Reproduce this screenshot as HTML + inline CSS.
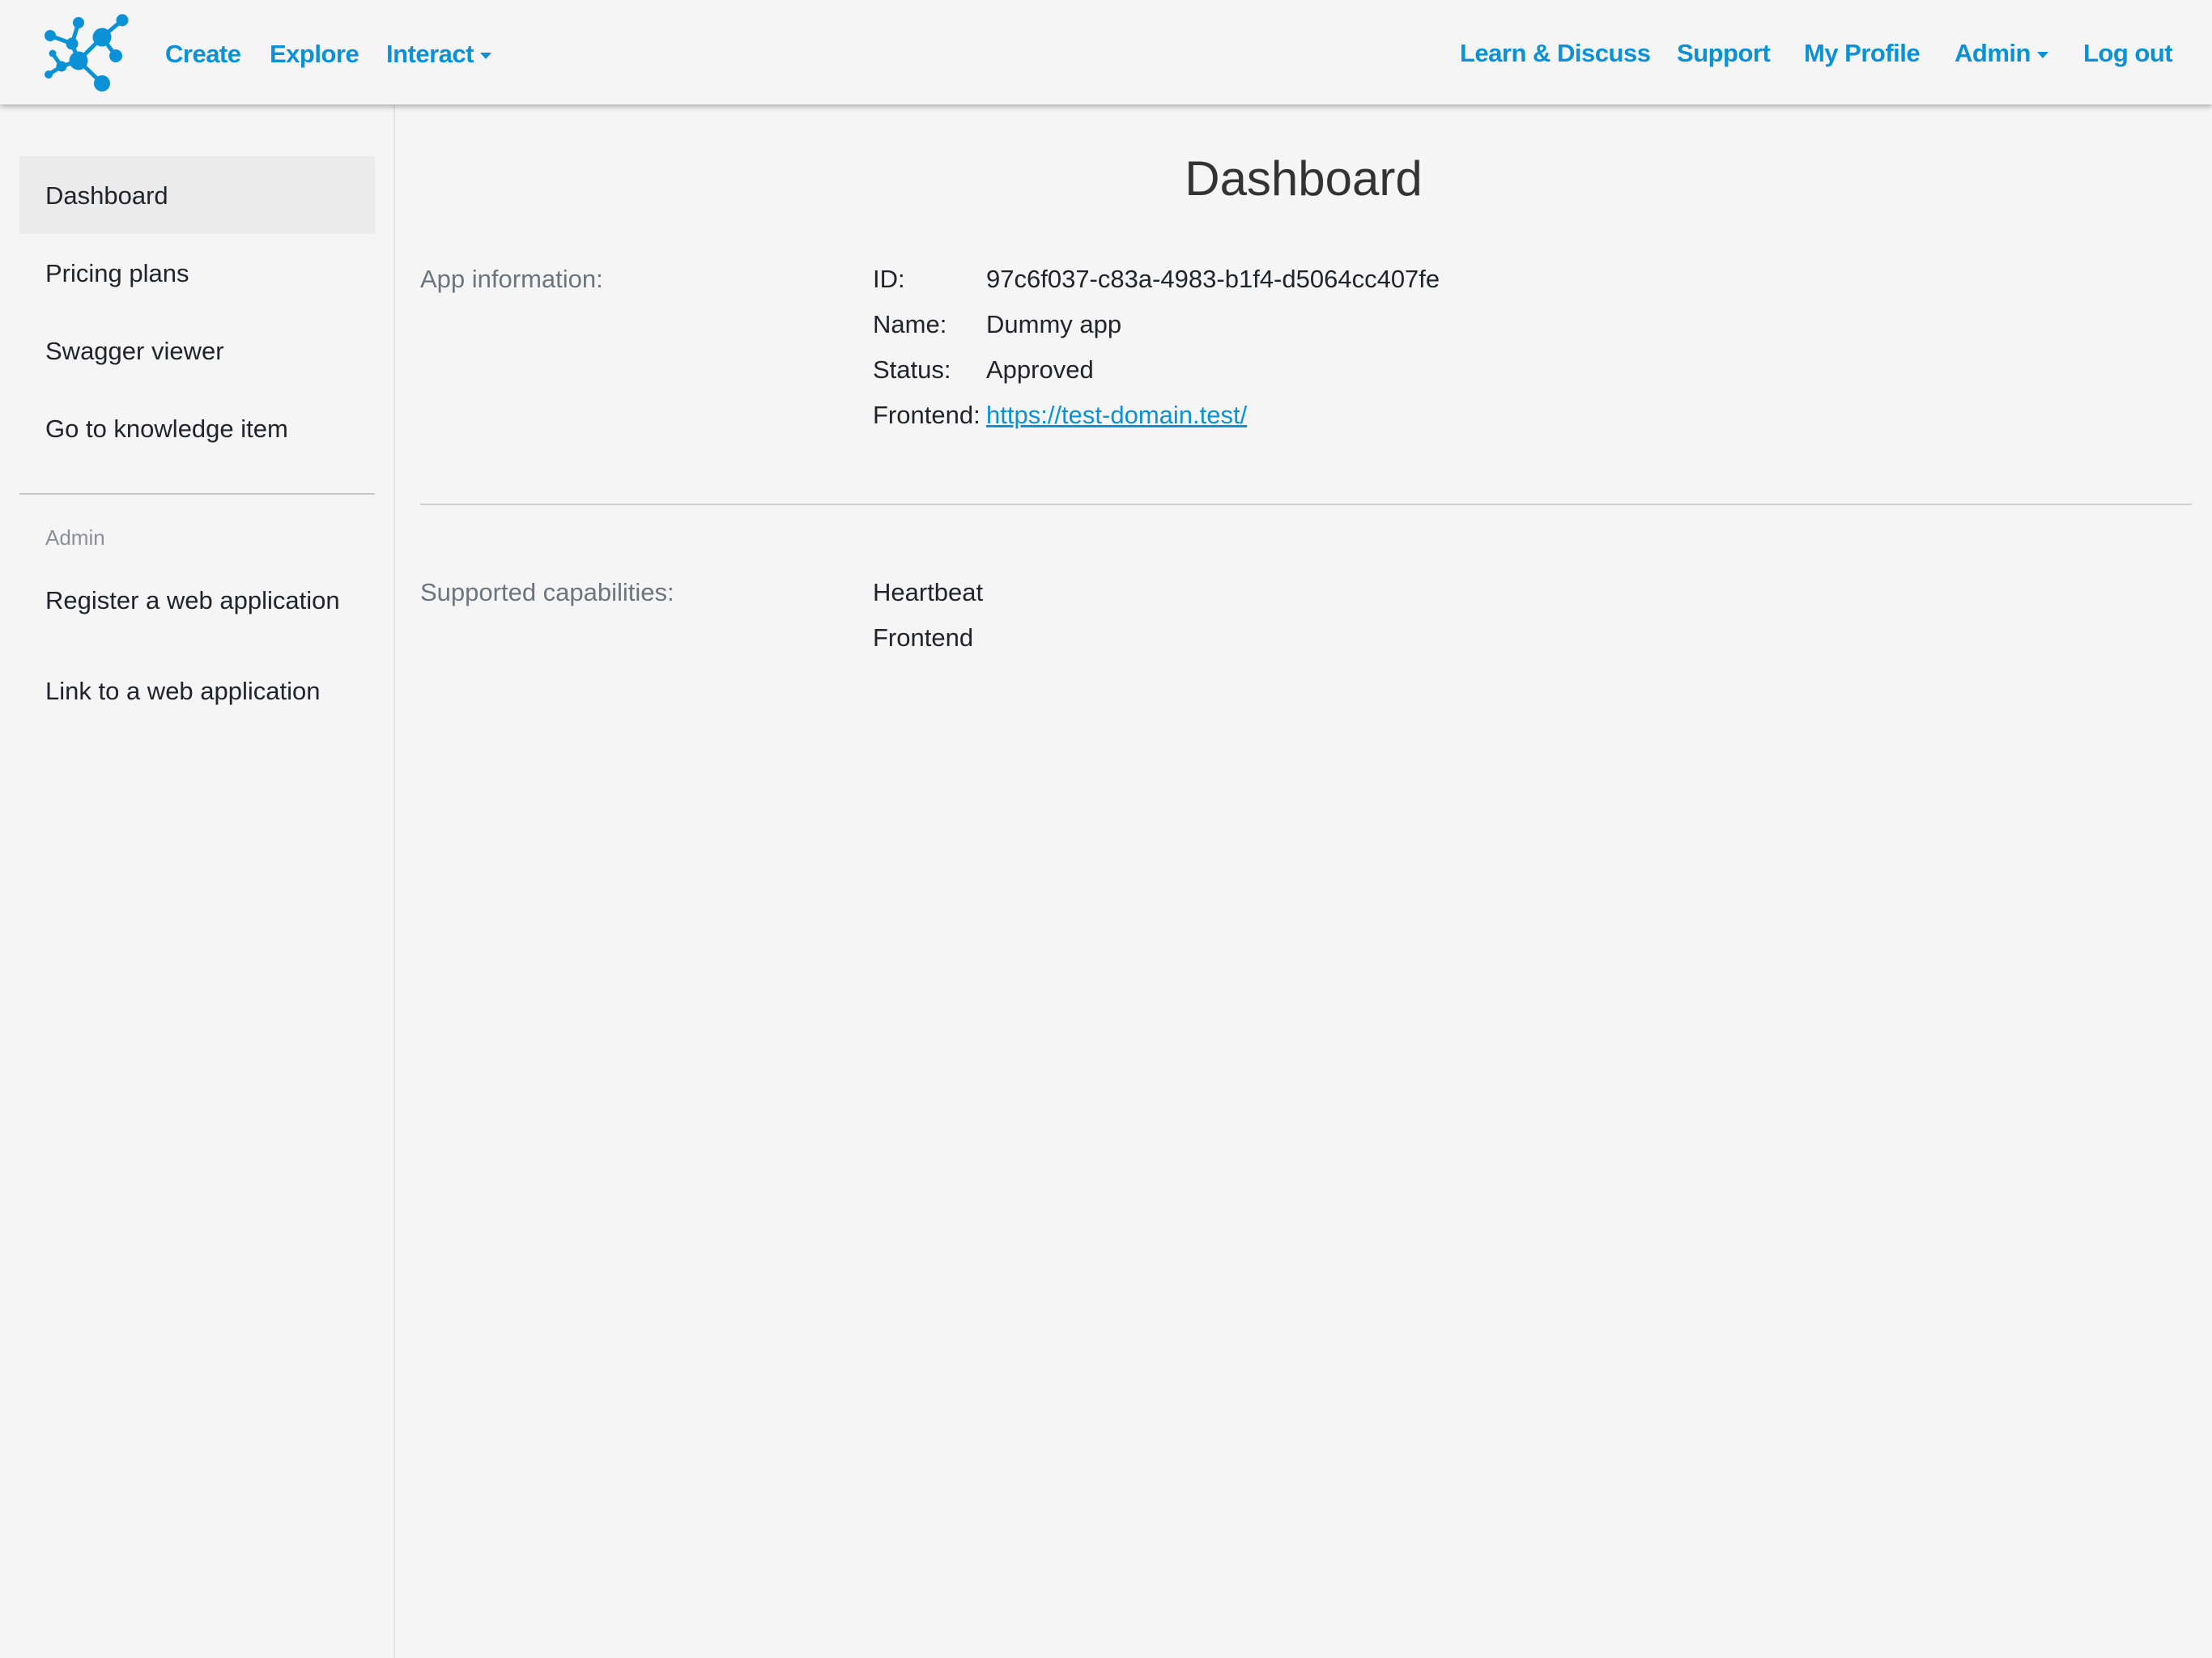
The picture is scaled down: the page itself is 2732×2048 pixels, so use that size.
<!DOCTYPE html>
<html><head><meta charset="utf-8"><style>
*{margin:0;padding:0;box-sizing:border-box}
body{width:2732px;height:2048px;background:#f5f5f5;font-family:"Liberation Sans",sans-serif;color:#212529;position:relative;overflow:hidden}
.hdr{position:absolute;left:0;top:0;width:2732px;height:129px;background:#f5f5f5;box-shadow:0 3px 6px rgba(0,0,0,.28);z-index:2}
.n{position:absolute;top:45px;height:44px;line-height:44px;font-size:31px;font-weight:bold;color:#0a91d6;white-space:nowrap;letter-spacing:-0.5px}
.car{display:inline-block;width:0;height:0;border-left:7px solid transparent;border-right:7px solid transparent;border-top:8px solid #0a91d6;vertical-align:middle;margin-left:8px}
.side{position:absolute;left:0;top:129px;width:488px;height:1919px;border-right:2px solid #e2e2e2}
.si{position:absolute;left:56px;font-size:31px;height:40px;line-height:40px;white-space:nowrap}
.t{position:absolute;font-size:31px;height:40px;line-height:40px;white-space:nowrap}
.g{color:#6c757d}
</style></head><body>
<div class="hdr">
<svg style="position:absolute;left:0;top:0" width="170" height="129" viewBox="0 0 170 129">
<g stroke="#0a91d6" stroke-width="5" fill="none">
<line x1="151" y1="25" x2="126" y2="46"/><line x1="126" y1="46" x2="143" y2="69"/><line x1="126" y1="46" x2="97" y2="75"/><line x1="97" y1="75" x2="126" y2="103"/><line x1="97" y1="75" x2="89" y2="54"/><line x1="89" y1="54" x2="97" y2="28"/><line x1="89" y1="54" x2="62" y2="44"/><line x1="97" y1="75" x2="76" y2="82"/><line x1="76" y1="82" x2="65" y2="66"/><line x1="76" y1="82" x2="60" y2="92"/>
</g>
<g fill="#0a91d6">
<circle cx="151" cy="25" r="7.5"/><circle cx="126" cy="46" r="11.5"/><circle cx="143" cy="69" r="8"/><circle cx="97" cy="75" r="11.5"/><circle cx="126" cy="103" r="10"/><circle cx="97" cy="28" r="7"/><circle cx="62" cy="44" r="7"/><circle cx="89" cy="54" r="7.5"/><circle cx="65" cy="66" r="4.5"/><circle cx="76" cy="82" r="6.5"/><circle cx="60" cy="92" r="5"/>
</g></svg>
<div class="n" style="left:204px">Create</div>
<div class="n" style="left:333px">Explore</div>
<div class="n" style="left:477px">Interact<span class="car"></span></div>
<div class="n" style="left:1803px;top:44px">Learn &amp; Discuss</div>
<div class="n" style="left:2071px;top:44px">Support</div>
<div class="n" style="left:2228px;top:44px">My Profile</div>
<div class="n" style="left:2414px;top:44px">Admin<span class="car"></span></div>
<div class="n" style="left:2573px;top:44px">Log out</div>
</div>
<div class="side">
<div style="position:absolute;left:24px;top:64px;width:439px;height:96px;background:#ebebeb"></div>
<div class="si" style="top:93px">Dashboard</div>
<div class="si" style="top:189px">Pricing plans</div>
<div class="si" style="top:285px">Swagger viewer</div>
<div class="si" style="top:381px">Go to knowledge item</div>
<div style="position:absolute;left:24px;top:480px;width:439px;height:2px;background:#c8c8c8"></div>
<div class="si g" style="top:515px;font-size:26px;color:#8a9096">Admin</div>
<div class="si" style="top:593px">Register a web application</div>
<div class="si" style="top:705px">Link to a web application</div>
</div>
<div class="t" style="left:488px;width:2244px;text-align:center;top:186px;height:70px;line-height:70px;font-size:60px;color:#333">Dashboard</div>
<div class="t g" style="left:519px;top:325px">App information:</div>
<div class="t" style="left:1078px;top:325px">ID:</div>
<div class="t" style="left:1218px;top:325px">97c6f037-c83a-4983-b1f4-d5064cc407fe</div>
<div class="t" style="left:1078px;top:381px">Name:</div>
<div class="t" style="left:1218px;top:381px">Dummy app</div>
<div class="t" style="left:1078px;top:437px">Status:</div>
<div class="t" style="left:1218px;top:437px">Approved</div>
<div class="t" style="left:1078px;top:493px">Frontend:</div>
<div class="t" style="left:1218px;top:493px;color:#0a91d6;text-decoration:underline">https://test-domain.test/</div>
<div style="position:absolute;left:519px;top:622px;width:2188px;height:2px;background:#cfcfcf"></div>
<div class="t g" style="left:519px;top:712px">Supported capabilities:</div>
<div class="t" style="left:1078px;top:712px">Heartbeat</div>
<div class="t" style="left:1078px;top:768px">Frontend</div>
</body></html>
